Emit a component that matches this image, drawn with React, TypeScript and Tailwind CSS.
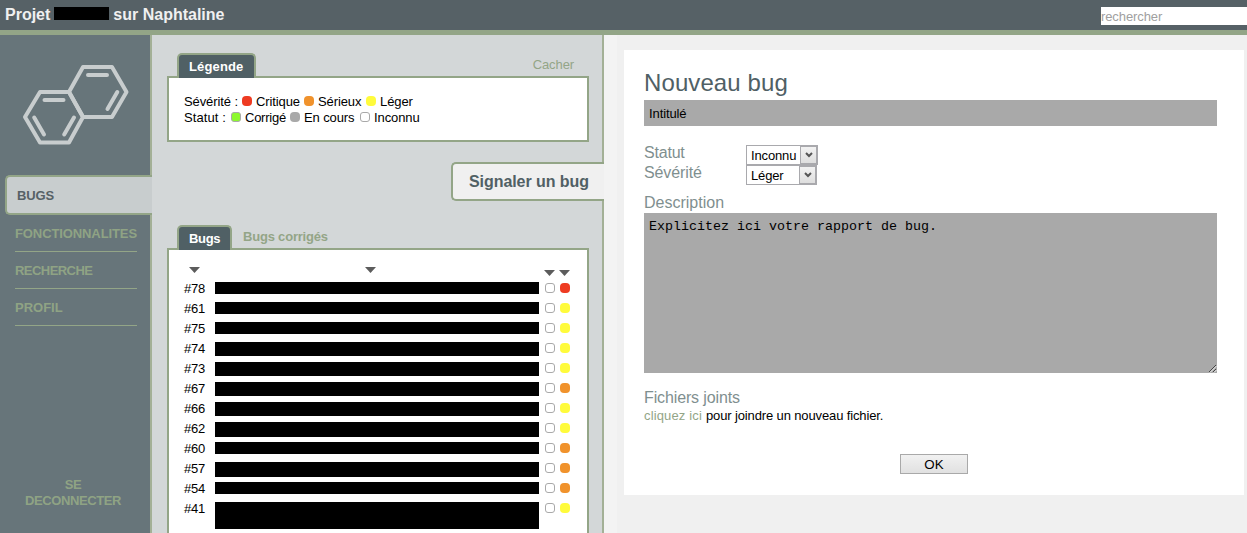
import React from "react";

type Tone = "critical" | "serious" | "light" | "fixed" | "progress" | "unknown";

const toneClass: Record<Tone, string> = {
  critical: "rounded-[4px] bg-[#ee3b22]",
  serious: "rounded-[4px] bg-[#f0922c]",
  light: "rounded-[4px] bg-[#fffb3c]",
  fixed: "rounded-[3px] border border-[#a9a9a9] bg-[#8df92e]",
  progress: "rounded-[4px] bg-[#a9a9a9]",
  unknown: "rounded-[3px] border border-[#a9a9a9] bg-white",
};

const Dot = ({ tone }: { tone: Tone }) => (
  <span className={`inline-block h-2.5 w-2.5 shrink-0 ${toneClass[tone]}`} />
);

const LegendItem = ({ tone, label, width }: { tone: Tone; label: string; width: string }) => (
  <span className={`flex gap-1 ${width}`}>
    <span className="flex pt-[2px]">
      <Dot tone={tone} />
    </span>
    {label}
  </span>
);

const Arrow = () => (
  <svg width="11" height="6" viewBox="0 0 11 6" className="block">
    <path d="M0 0H11L5.5 6Z" fill="#5c5c5c" />
  </svg>
);

const Logo = () => (
  <svg
    width="110"
    height="84"
    viewBox="20 63 110 84"
    fill="none"
    stroke="#c8cdce"
    strokeWidth="4"
    strokeLinejoin="round"
    strokeLinecap="round"
    className="mt-7 ml-5 block"
  >
    <path d="M83 67H112L126.5 92L112 117H83L69 92Z" />
    <path d="M69 92L83 117L69 142.5H40L25 117L40 92Z" />
    <path d="M88 75H107M117.3 92L107.5 109M44.5 100H63.5M34.2 117.5L44 134.5M74 117.5L64.2 134.5" />
  </svg>
);

const bugs: { id: number; bar: string; tone: Tone }[] = [
  { id: 78, bar: "h-3", tone: "critical" },
  { id: 61, bar: "h-3", tone: "light" },
  { id: 75, bar: "h-3", tone: "light" },
  { id: 74, bar: "h-3.5", tone: "light" },
  { id: 73, bar: "h-3.5", tone: "light" },
  { id: 67, bar: "h-3.5", tone: "serious" },
  { id: 66, bar: "h-3.5", tone: "light" },
  { id: 62, bar: "h-[15px]", tone: "light" },
  { id: 60, bar: "h-3", tone: "serious" },
  { id: 57, bar: "h-[15px]", tone: "serious" },
  { id: 54, bar: "h-3", tone: "serious" },
  { id: 41, bar: "h-[27px]", tone: "light" },
];

const Tab = ({ children, width }: { children: React.ReactNode; width: string }) => (
  <div
    className={`relative z-10 h-[25px] rounded-t-[5px] border-2 border-b-0 border-[#93a587] bg-[#506065] pl-2.5 text-[13px] leading-[23px] font-bold text-white ${width}`}
  >
    {children}
  </div>
);

const Select = ({ value, width }: { value: string; width: string }) => (
  <button className={`flex h-5 items-stretch border border-[#a9a9ad] bg-white text-left ${width}`}>
    <span className="flex-1 pl-1 leading-[19px] tracking-[-0.15px]">{value}</span>
    <span className="flex w-[17px] shrink-0 items-center justify-center border border-[#a9a9ad] bg-linear-to-b from-[#f2f2f2] to-[#dedede]">
      <svg width="8" height="6" viewBox="0 0 8 6" fill="none" stroke="#555" strokeWidth="2">
        <path d="M1 1L4 4L7 1" />
      </svg>
    </span>
  </button>
);

export default function App() {
  return (
    <div className="flex h-[533px] w-[1247px] flex-col overflow-hidden bg-[#f0f0f0] font-['Liberation_Sans',Arial,sans-serif] text-[13px] leading-4 whitespace-nowrap text-black">
      <header className="flex h-[35px] shrink-0 items-start justify-between border-b-[5px] border-[#93a587] bg-[#566166]">
        <h1 className="flex pl-[5px] text-base leading-[29px] font-bold text-[#f0f0f0]">
          Projet
          <span className="mt-[7px] mr-1 ml-1 h-[13px] w-[55px] bg-black" />
          sur Naphtaline
        </h1>
        <input
          placeholder="rechercher"
          className="mt-[7px] h-[18px] w-[146px] bg-white p-0 text-[13px] tracking-[-0.1px] outline-none placeholder:text-[#a0a0a0]"
        />
      </header>

      <div className="flex min-h-0 flex-1">
        <aside className="flex w-[152px] shrink-0 flex-col border-r-2 border-[#a3b096] bg-[#67757a] font-bold text-[#8fa384]">
          <Logo />
          <nav className="mt-[28px] flex flex-col">
            <a className="relative -mr-0.5 ml-[5px] h-10 rounded-l-[5px] border-2 border-r-0 border-[#93a587] bg-[#c8cdce] pl-2.5 leading-[37px] tracking-[-0.1px] text-[#566166]">
              BUGS
            </a>
            <a className="ml-[15px] h-[37px] w-[122px] border-b border-[#93a587] leading-[38px] tracking-[-0.1px]">FONCTIONNALITES</a>
            <a className="ml-[15px] h-[37px] w-[122px] border-b border-[#93a587] leading-[38px] tracking-[-0.55px]">RECHERCHE</a>
            <a className="ml-[15px] h-[37px] w-[122px] border-b border-[#93a587] leading-[38px]">PROFIL</a>
          </nav>
          <a className="mt-auto mb-6 pr-1 text-center tracking-[-0.4px]">
            SE
            <br />
            DECONNECTER
          </a>
        </aside>

        <section className="flex w-[452px] shrink-0 flex-col border-r-2 border-[#a3b096] bg-[#d3d7d8] pl-[15px]">
          <div className="mt-[18px] flex items-start justify-between pr-[28px] pl-2.5">
            <Tab width="w-[79px]">
              <span className="tracking-[0.15px]">Légende</span>
            </Tab>
            <a className="pt-1 tracking-[-0.1px] text-[#93a587]">Cacher</a>
          </div>
          <div className="-mt-0.5 h-[66px] w-[422px] border-2 border-[#93a587] bg-white pt-4 pl-[15px] tracking-[-0.1px]">
            <div className="flex">
              <span className="w-[58px]">Sévérité :</span>
              <LegendItem tone="critical" label="Critique" width="w-[62px]" />
              <LegendItem tone="serious" label="Sérieux" width="w-[62px]" />
              <LegendItem tone="light" label="Léger" width="w-[60px]" />
            </div>
            <div className="flex">
              <span className="w-[47px] tracking-[0.1px]">Statut :</span>
              <LegendItem tone="fixed" label="Corrigé" width="w-[59px] tracking-[-0.25px]" />
              <LegendItem tone="progress" label="En cours" width="w-[70px]" />
              <LegendItem tone="unknown" label="Inconnu" width="w-[62px]" />
            </div>
          </div>

          <button className="relative mt-5 -mr-0.5 h-[39px] w-[153px] self-end rounded-l-[5px] border-2 border-r-0 border-[#93a587] bg-[#f0f0f0] pl-4 text-left text-base leading-[35px] font-bold tracking-[-0.07px] text-[#506065]">
            Signaler un bug
          </button>

          <div className="mt-6 flex items-start gap-[11px] pl-2.5">
            <Tab width="w-[55px]">
              <span className="tracking-[-0.35px]">Bugs</span>
            </Tab>
            <a className="pt-1 font-bold tracking-[-0.2px] text-[#93a587]">Bugs corrigés</a>
          </div>
          <div className="-mt-0.5 w-[422px] flex-1 border-2 border-b-0 border-[#93a587] bg-white pl-[15px]">
            <div className="flex h-7 pt-[17px]">
              <div className="w-[31px] pl-[5px]"><Arrow /></div>
              <div className="w-[324px] pl-[150px]"><Arrow /></div>
              <div className="flex gap-1 pt-[3px] pl-[5px]">
                <Arrow />
                <Arrow />
              </div>
            </div>
            {bugs.map((b) => (
              <div key={b.id} className="flex h-5">
                <span className="w-[31px] pt-px leading-5 tracking-[-0.25px]">#{b.id}</span>
                <span className={`mt-1 w-[324px] shrink-0 bg-black ${b.bar}`} />
                <span className="flex gap-[5px] pt-[5px] pl-1.5">
                  <Dot tone="unknown" />
                  <Dot tone={b.tone} />
                </span>
              </div>
            ))}
          </div>
        </section>

        <div className="w-[13px] shrink-0 bg-[#f3f3f3]" />

        <main className="mt-[15px] ml-[7px] flex h-[445px] w-[620px] flex-col bg-white pr-[27px] pl-5">
          <h2 className="mt-4 h-[34px] text-2xl leading-[33px] tracking-[0.1px] text-[#506065]">Nouveau bug</h2>
          <input
            defaultValue="Intitulé"
            className="h-[26px] bg-[#a9a9a9] pt-px pl-[5px] tracking-[-0.1px] outline-none"
          />
          <div className="mt-[19px] flex h-5">
            <label className="w-[102px] text-base leading-4 tracking-[-0.2px] text-[#7f8f8f]">Statut</label>
            <Select value="Inconnu" width="w-[72px]" />
          </div>
          <div className="flex h-5">
            <label className="w-[102px] text-base leading-4 tracking-[-0.1px] text-[#7f8f8f]">Sévérité</label>
            <Select value="Léger" width="w-[71px]" />
          </div>
          <label className="mt-2 h-5 text-base leading-5 text-[#7f8f8f]">Description</label>
          <div className="relative h-40">
            <textarea
              defaultValue="Explicitez ici votre rapport de bug."
              className="block h-40 w-full resize-none bg-[#a9a9a9] px-[5px] pt-1.5 font-['Liberation_Mono','Courier_New',monospace] text-[13.333px] leading-4 outline-none"
            />
            <svg width="9" height="9" viewBox="0 0 9 9" className="absolute right-0 bottom-0" fill="none">
              <path d="M1 8L8 1M5 8L8 5" stroke="#444" />
              <path d="M2 8.5L8.5 2M6 8.5L8.5 6" stroke="#eee" />
            </svg>
          </div>
          <h3 className="mt-4 h-[18px] text-base leading-[18px] tracking-[-0.13px] text-[#7f8f8f]">Fichiers joints</h3>
          <p className="flex h-4 pt-px">
            <a className="w-[62px] tracking-[0.15px] text-[#93a587]">cliquez ici</a>
            <span className="tracking-[-0.13px]">pour joindre un nouveau fichier.</span>
          </p>
          <button className="mt-[31px] ml-64 h-5 w-[68px] border border-[#a9a9a9] bg-linear-to-b from-[#f1f1f1] to-[#e1e1e1] pt-px text-[13.333px] leading-[18px]">
            OK
          </button>
        </main>
      </div>
    </div>
  );
}
